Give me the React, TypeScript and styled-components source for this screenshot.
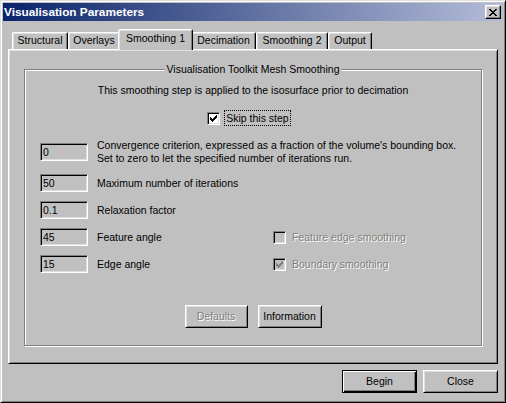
import React from 'react';
import styled, { createGlobalStyle } from 'styled-components';

const Global = createGlobalStyle`
  html, body { margin: 0; padding: 0; background: #c0c0c0; }
  body { font-family: "Liberation Sans", Arial, sans-serif; font-size: 10.5px; color: #000; }
  * { box-sizing: border-box; }
`;

const Window = styled.div`
  width: 506px;
  height: 403px;
  background: #c0c0c0;
  border: 1px solid;
  border-color: #dfdfdf #000 #000 #dfdfdf;
  box-shadow: inset 1px 1px 0 #fff, inset -1px -1px 0 #808080;
  padding: 2px;
  display: flex;
  flex-direction: column;
`;

const TitleBar = styled.div`
  height: 18px;
  flex: none;
  background: linear-gradient(to right, #0a246a, #b4bcd8);
  display: flex;
  align-items: center;
  justify-content: space-between;
  padding: 0 2px 0 1px;
`;

const TitleText = styled.span`
  color: #fff;
  font-weight: bold;
  font-size: 11.8px;
  line-height: 13px;
`;

const CloseBox = styled.div`
  width: 16px;
  height: 14px;
  background: #c0c0c0;
  border: 1px solid;
  border-color: #fff #000 #000 #fff;
  box-shadow: inset -1px -1px 0 #808080, inset 1px 1px 0 #dfdfdf;
  display: flex;
  align-items: center;
  justify-content: center;
`;

const Body = styled.div`
  flex: 1;
  display: flex;
  flex-direction: column;
  padding: 8px 5px 7px 5px;
`;

const TabStrip = styled.div`
  height: 20px;
  flex: none;
  display: flex;
  align-items: flex-end;
  padding-left: 4px;
`;

const Tab = styled.div<{ $active?: boolean; $w: number }>`
  position: relative;
  width: ${(p) => p.$w + (p.$active ? 4 : 0)}px;
  height: ${(p) => (p.$active ? 21 : 17)}px;
  margin: 0 ${(p) => (p.$active ? -2 : 0)}px ${(p) => (p.$active ? -1 : 0)}px;
  z-index: ${(p) => (p.$active ? 2 : 1)};
  padding-top: ${(p) => (p.$active ? 2 : 1)}px;
  display: flex;
  justify-content: center;
  background: #c0c0c0;
  border: 1px solid;
  border-bottom: none;
  border-color: #fff #000 #000 #fff;
  border-radius: 2px 2px 0 0;
  box-shadow: inset -1px 0 0 #808080, inset 1px 1px 0 #dfdfdf;
  line-height: 13px;
  white-space: nowrap;
`;

const Panel = styled.div`
  height: 315px;
  flex: none;
  display: flex;
  border: 1px solid;
  border-color: #fff #000 #000 #fff;
  box-shadow: inset 1px 1px 0 #dfdfdf, inset -1px -1px 0 #808080;
  padding: 19px 15px 17px 15px;
`;

const GroupBox = styled.div`
  position: relative;
  flex: 1;
  display: flex;
  flex-direction: column;
  border: 1px solid #808080;
  box-shadow: inset 1px 1px 0 #fff, 1px 1px 0 #fff;
  padding: 14px 0 17px 0;
`;

const Legend = styled.span`
  position: absolute;
  top: -7px;
  left: 50%;
  transform: translateX(-50%);
  padding: 0 2px;
  background: #c0c0c0;
  line-height: 13px;
  white-space: nowrap;
`;

const Description = styled.div`
  text-align: center;
  line-height: 13px;
`;

const CheckRow = styled.div<{ $offset?: number }>`
  display: flex;
  justify-content: center;
  align-items: center;
  gap: 4px;
  margin-top: 13px;
  padding-right: ${(p) => p.$offset ?? 0}px;
`;

const CheckItem = styled.div`
  display: flex;
  align-items: center;
  gap: 4px;
`;

const Box = styled.div<{ $disabled?: boolean }>`
  width: 13px;
  height: 13px;
  flex: none;
  border: 1px solid;
  border-color: #808080 #fff #fff #808080;
  box-shadow: inset 1px 1px 0 #000, inset -1px -1px 0 #dfdfdf;
  background: ${(p) => (p.$disabled ? '#c0c0c0' : '#fff')};
  display: flex;
  align-items: center;
  justify-content: center;
`;

const CheckLabel = styled.span<{ $focus?: boolean; $disabled?: boolean }>`
  border: 1px ${(p) => (p.$focus ? 'dotted #000' : 'solid transparent')};
  padding: 0 1px;
  line-height: 14px;
  white-space: nowrap;
  color: ${(p) => (p.$disabled ? '#808080' : '#000')};
  text-shadow: ${(p) => (p.$disabled ? '1px 1px 0 #fff' : 'none')};
`;

const ParamGrid = styled.div`
  display: grid;
  grid-template-columns: 48px 167px 1fr;
  grid-template-rows: 26px repeat(4, 18px);
  column-gap: 9px;
  row-gap: 9px;
  align-items: center;
  margin: 13px 0 0 15px;
`;

const Field = styled.input`
  width: 48px;
  height: 18px;
  border: 1px solid;
  border-color: #808080 #fff #fff #808080;
  box-shadow: inset 1px 1px 0 #000, inset -1px -1px 0 #dfdfdf;
  background: #c0c0c0;
  font: inherit;
  color: #000;
  padding: 0 1px 0 2px;
  outline: none;
`;

const ParamLabel = styled.div<{ $wide?: boolean }>`
  line-height: 13px;
  grid-column: ${(p) => (p.$wide ? '2 / 4' : 'auto')};
  white-space: nowrap;
`;

const ButtonRow = styled.div<{ $align: string; $gap: number }>`
  display: flex;
  justify-content: ${(p) => p.$align};
  gap: ${(p) => p.$gap}px;
`;

const CenterButtons = styled(ButtonRow)`
  margin-top: auto;
`;

const Footer = styled(ButtonRow)`
  margin-top: 6px;
`;

const Button = styled.div<{ $w: number; $disabled?: boolean; $default?: boolean }>`
  width: ${(p) => p.$w}px;
  height: 23px;
  display: flex;
  align-items: center;
  justify-content: center;
  background: #c0c0c0;
  border: 1px solid;
  border-color: ${(p) => (p.$default ? '#000' : '#fff #000 #000 #fff')};
  box-shadow: ${(p) =>
    p.$default
      ? 'inset 1px 1px 0 #fff, inset -1px -1px 0 #000, inset -2px -2px 0 #808080'
      : 'inset 1px 1px 0 #dfdfdf, inset -1px -1px 0 #808080'};
  color: ${(p) => (p.$disabled ? '#808080' : '#000')};
  text-shadow: ${(p) => (p.$disabled ? '1px 1px 0 #fff' : 'none')};
  line-height: 13px;
`;

const CheckGlyph: React.FC<{ color: string }> = ({ color }) => (
  <svg width="7" height="7" viewBox="0 0 7 7" shapeRendering="crispEdges">
    {[2, 3, 4, 3, 2, 1, 0].map((top, i) => (
      <rect key={i} x={i} y={top} width="1" height="3" fill={color} />
    ))}
  </svg>
);

const CloseGlyph = () => (
  <svg width="8" height="7" viewBox="0 0 8 7" shapeRendering="crispEdges">
    {[0, 1, 2, 3, 4, 5, 6].map((r) => (
      <React.Fragment key={r}>
        <rect x={r} y={r} width="2" height="1" fill="#000" />
        <rect x={6 - r} y={r} width="2" height="1" fill="#000" />
      </React.Fragment>
    ))}
  </svg>
);

const Check: React.FC<{ checked?: boolean; disabled?: boolean }> = ({ checked, disabled }) => (
  <Box $disabled={disabled}>{checked && <CheckGlyph color={disabled ? '#808080' : '#000'} />}</Box>
);

const tabs = [
  { label: 'Structural', w: 56 },
  { label: 'Overlays', w: 52 },
  { label: 'Smoothing 1', w: 71 },
  { label: 'Decimation', w: 65 },
  { label: 'Smoothing 2', w: 72 },
  { label: 'Output', w: 44 },
];

const params = [
  { value: '50', label: 'Maximum number of iterations' },
  { value: '0.1', label: 'Relaxation factor' },
  { value: '45', label: 'Feature angle', check: { label: 'Feature edge smoothing', checked: false } },
  { value: '15', label: 'Edge angle', check: { label: 'Boundary smoothing', checked: true } },
];

export default function App() {
  return (
    <>
      <Global />
      <Window>
        <TitleBar>
          <TitleText>Visualisation Parameters</TitleText>
          <CloseBox>
            <CloseGlyph />
          </CloseBox>
        </TitleBar>
        <Body>
          <TabStrip>
            {tabs.map((t) => (
              <Tab key={t.label} $w={t.w} $active={t.label === 'Smoothing 1'}>
                {t.label}
              </Tab>
            ))}
          </TabStrip>
          <Panel>
            <GroupBox>
              <Legend>Visualisation Toolkit Mesh Smoothing</Legend>
              <Description>This smoothing step is applied to the isosurface prior to decimation</Description>
              <CheckRow $offset={8}>
                <Check checked />
                <CheckLabel $focus>Skip this step</CheckLabel>
              </CheckRow>
              <ParamGrid>
                <Field readOnly value="0" />
                <ParamLabel $wide>
                  Convergence criterion, expressed as a fraction of the volume's bounding box.
                  <br />
                  Set to zero to let the specified number of iterations run.
                </ParamLabel>
                {params.map((p) => (
                  <React.Fragment key={p.label}>
                    <Field readOnly value={p.value} />
                    <ParamLabel $wide={!p.check}>{p.label}</ParamLabel>
                    {p.check && (
                      <CheckItem>
                        <Check disabled checked={p.check.checked} />
                        <CheckLabel $disabled>{p.check.label}</CheckLabel>
                      </CheckItem>
                    )}
                  </React.Fragment>
                ))}
              </ParamGrid>
              <CenterButtons $align="center" $gap={10}>
                <Button $w={63} $disabled>
                  Defaults
                </Button>
                <Button $w={64}>Information</Button>
              </CenterButtons>
            </GroupBox>
          </Panel>
          <Footer $align="flex-end" $gap={6}>
            <Button $w={75} $default>
              Begin
            </Button>
            <Button $w={75}>Close</Button>
          </Footer>
        </Body>
      </Window>
    </>
  );
}
